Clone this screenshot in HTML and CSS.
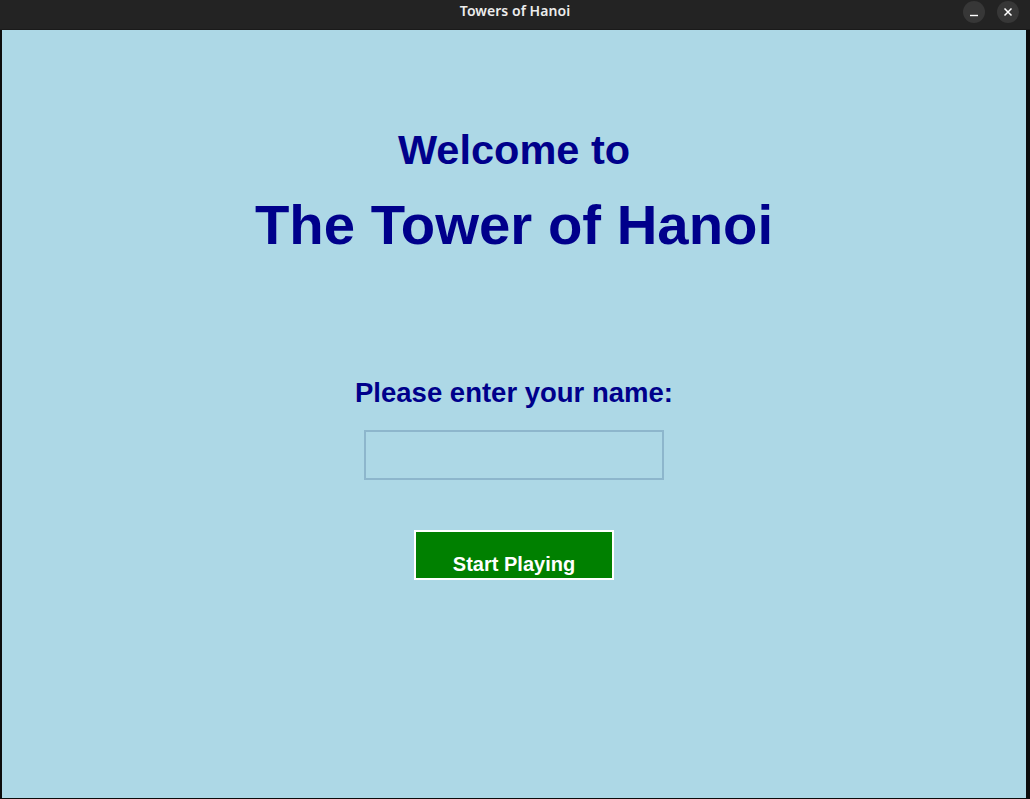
FILE: index.html
```html
<!DOCTYPE html>
<html lang="en">
<head>
<meta charset="utf-8">
<title>Towers of Hanoi</title>
<link rel="stylesheet" href="styles.css">
</head>
<body>
<div class="window">
  <header class="titlebar">
    <div class="tb-spacer"></div>
    <div class="tb-title">Towers of Hanoi</div>
    <div class="tb-controls">
      <span class="tb-btn">
        <svg width="22" height="22" viewBox="0 0 22 22"><line x1="7" y1="14.5" x2="15" y2="14.5" stroke="#ffffff" stroke-width="1.4"/></svg>
      </span>
      <span class="tb-btn">
        <svg width="22" height="22" viewBox="0 0 22 22"><path d="M7.5 7.5 L14.5 14.5 M14.5 7.5 L7.5 14.5" stroke="#ffffff" stroke-width="1.5" fill="none"/></svg>
      </span>
    </div>
  </header>
  <main class="content">
    <h2 class="welcome">Welcome to</h2>
    <h1 class="title">The Tower of Hanoi</h1>
    <label class="prompt" for="name">Please enter your name:</label>
    <input class="name-input" id="name" type="text">
    <button class="start-btn" type="button">Start Playing</button>
  </main>
</div>
</body>
</html>
```
FILE: styles.css
```css
html, body {
  margin: 0;
  padding: 0;
}
body {
  background: #0c0c0c;
  width: 1030px;
  height: 799px;
  overflow: hidden;
}
.window {
  display: flex;
  flex-direction: column;
  width: 1030px;
  height: 799px;
}
.titlebar {
  height: 30px;
  background: #232323;
  display: grid;
  grid-template-columns: 1fr auto 1fr;
  align-items: start;
  box-sizing: border-box;
  border-bottom: 1px solid #1a1a1a;
}
.tb-title {
  font-family: "Noto Sans", "DejaVu Sans", sans-serif;
  font-size: 14px;
  font-weight: 600;
  color: #ececec;
  line-height: 22px;
  letter-spacing: 0.05px;
}
.tb-controls {
  display: flex;
  justify-content: flex-end;
  gap: 12px;
  padding-right: 11px;
  padding-top: 1px;
}
.tb-btn {
  width: 22px;
  height: 22px;
  border-radius: 50%;
  background: #373737;
  display: flex;
}
.content {
  margin: 0 4px 0 2px;
  height: 768px;
  background: #add8e6;
  display: flex;
  flex-direction: column;
  align-items: center;
  padding-top: 96px;
  box-sizing: border-box;
  font-family: "Liberation Sans", Arial, sans-serif;
  color: #00008b;
}
.welcome {
  margin: 0;
  font-size: 41.5px;
  line-height: 48px;
  font-weight: bold;
}
.title {
  margin: 19px 0 0;
  font-size: 56.3px;
  line-height: 64px;
  font-weight: bold;
}
.prompt {
  margin-top: 120px;
  font-size: 27.5px;
  line-height: 32px;
  font-weight: bold;
}
.name-input {
  margin-top: 21px;
  width: 300px;
  height: 50px;
  box-sizing: border-box;
  border: 2px solid #8db6cc;
  background: #add8e6;
  outline: none;
  padding: 0 4px;
  font-family: "Liberation Sans", Arial, sans-serif;
  font-size: 16px;
}
.start-btn {
  margin-top: 50px;
  width: 200px;
  height: 50px;
  box-sizing: border-box;
  border: 2px solid #ffffff;
  background: #008000;
  color: #ffffff;
  font-family: "Liberation Sans", Arial, sans-serif;
  font-size: 20px;
  font-weight: bold;
  line-height: 24px;
  padding: 20px 0 2px;
  display: flex;
  justify-content: center;
  align-items: flex-start;
}
```
